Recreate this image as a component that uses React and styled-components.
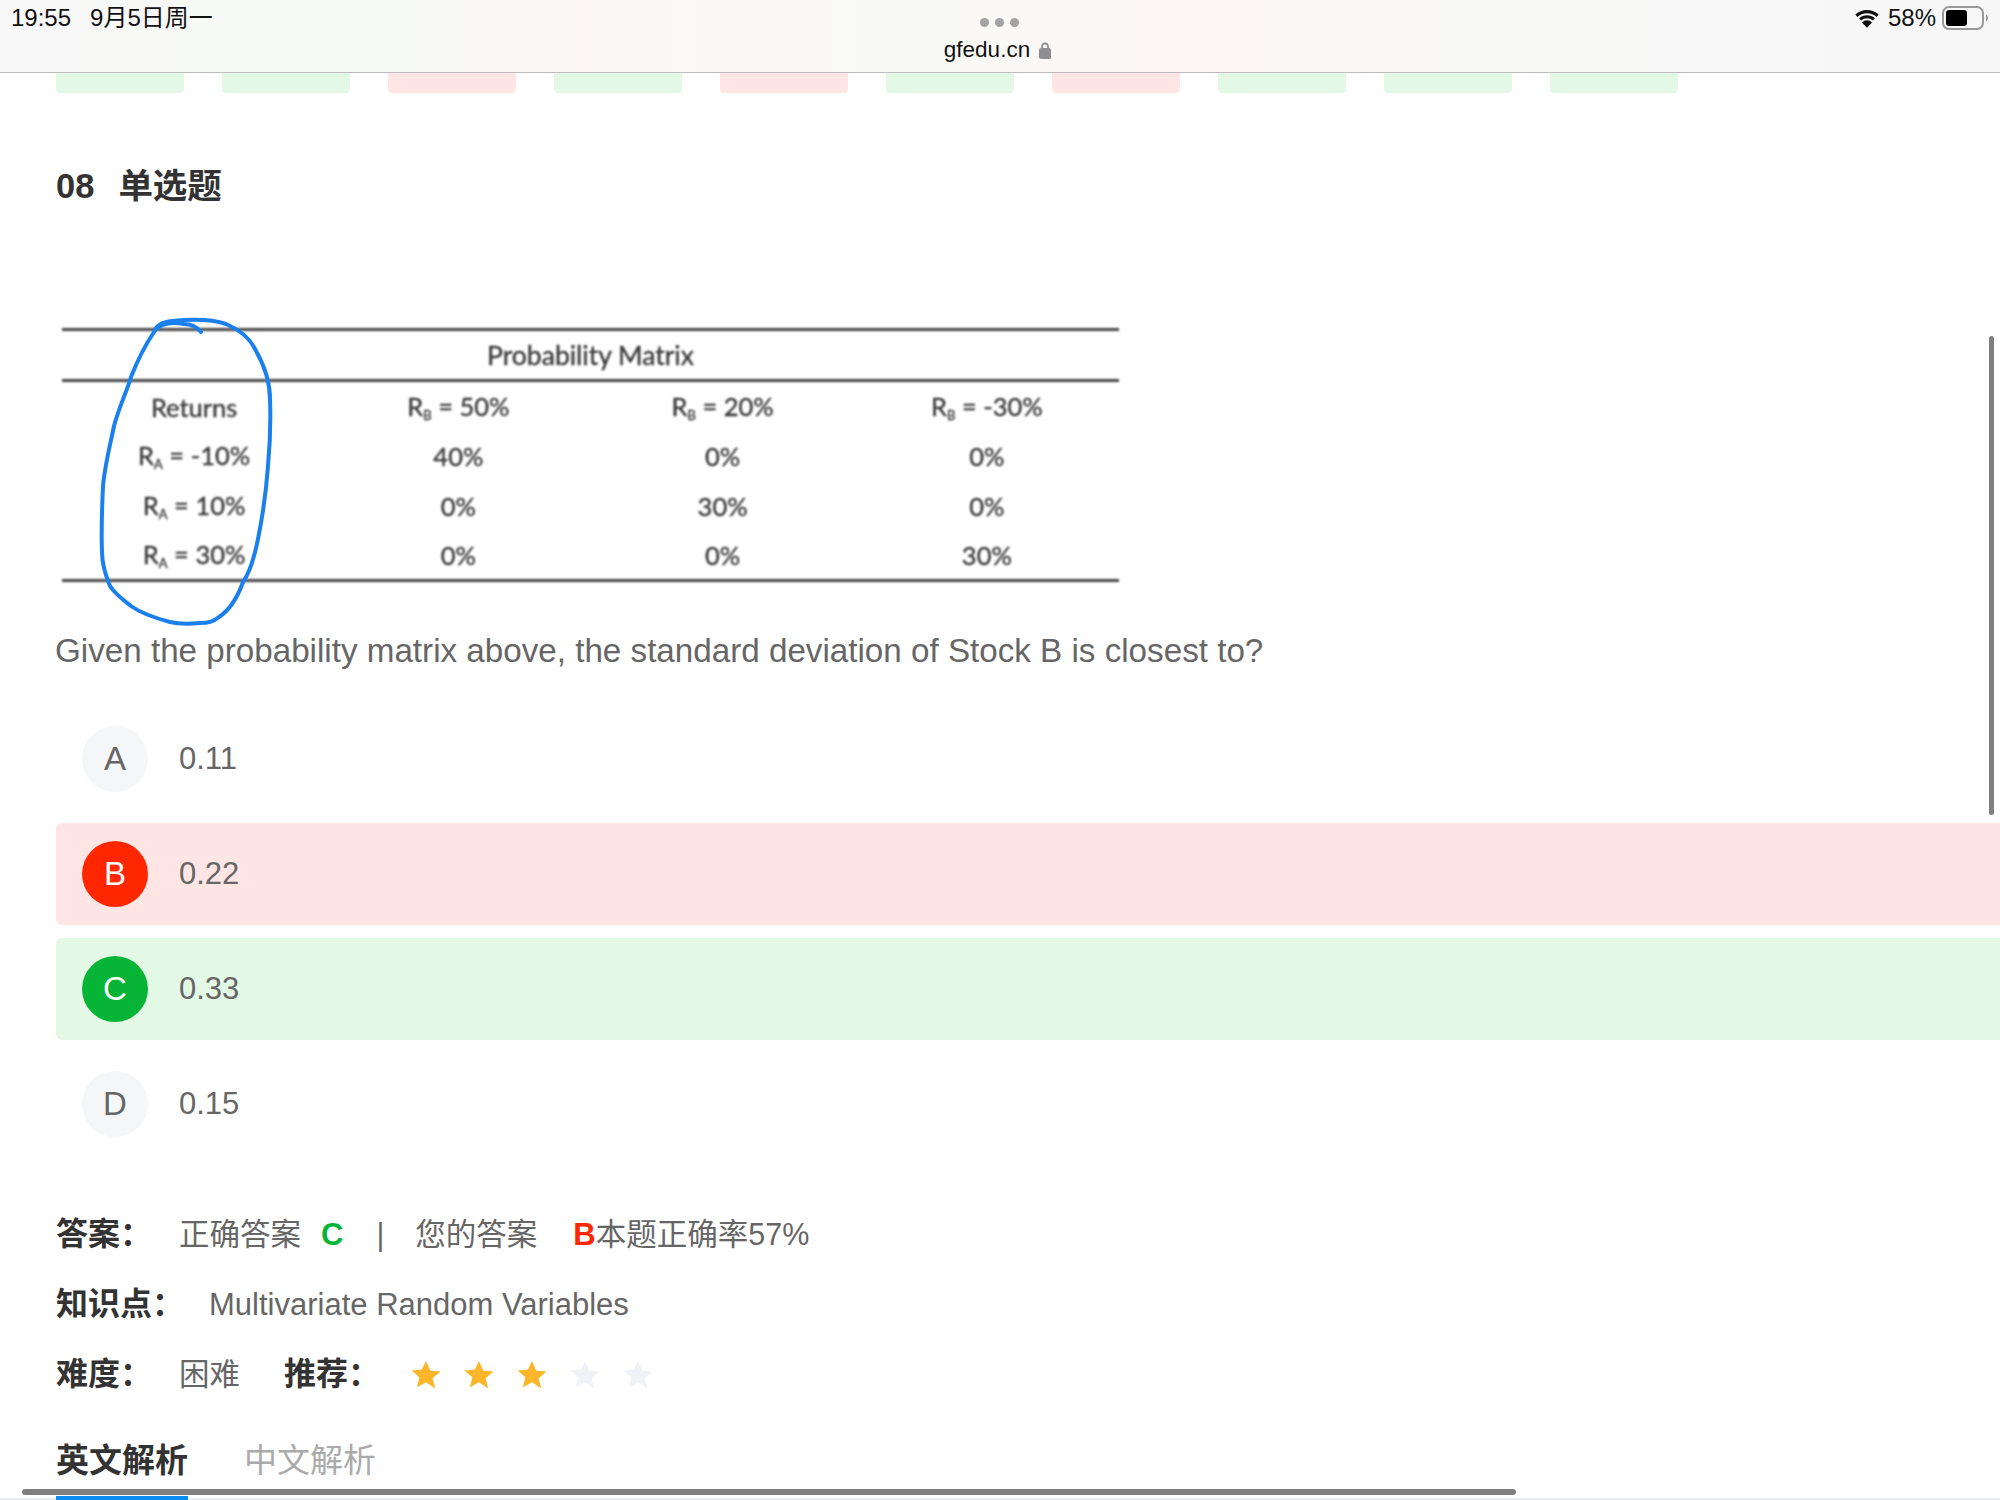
import React from 'react'
import styled, { createGlobalStyle } from 'styled-components'

const sans = '"Liberation Sans", "Noto Sans CJK SC", sans-serif'

const GlobalStyle = createGlobalStyle`
  html, body { margin: 0; padding: 0; background: #fff; }
  body { font-family: ${sans}; }
`

const Page = styled.div`
  position: relative;
  width: 2000px;
  height: 1500px;
  overflow: hidden;
  background: #fff;
  color: #666;
`

const StatusBar = styled.header`
  display: grid;
  grid-template-columns: 1fr auto 1fr;
  height: 72px;
  padding: 0 11px;
  border-bottom: 1px solid #bdbdbd;
  background: linear-gradient(90deg, #f7f8f7 0%, #f8faf7 20%, #fdf8f5 29%, #f9faf7 45%, #fdf7f5 60%, #f8f9f7 75%, #f7f7f8 100%);
  color: #111;
`

const StatusLeft = styled.div`
  display: flex;
  gap: 19px;
  align-items: baseline;
  height: 36px;
  line-height: 36px;
  font-size: 24px;
`

const StatusCenter = styled.div`
  display: flex;
  flex-direction: column;
  align-items: center;
`

const Dots = styled.div`
  display: flex;
  gap: 6px;
  margin-top: 18px;
`

const Dot = styled.i`
  width: 9px;
  height: 9px;
  border-radius: 50%;
  background: #a3a3a3;
`

const Url = styled.div`
  display: flex;
  align-items: center;
  gap: 9px;
  margin: 10px 5px 0 0;
  font-size: 22.500px;
  line-height: 26px;
`

const StatusRight = styled.div`
  display: flex;
  justify-content: flex-end;
  align-items: center;
  height: 36px;
  font-size: 24px;
`

const Percent = styled.span`
  margin: 0 6px 0 9px;
`

const ChipRow = styled.div`
  display: flex;
  gap: 38px;
  padding: 0 56px;
`

const Chip = styled.div`
  width: 128px;
  height: 20px;
  border-radius: 0 0 4px 4px;
  background: ${(p) => (p.$ok ? '#e3f8e5' : '#ffe6e5')};
`

const Title = styled.h2`
  display: flex;
  gap: 24px;
  margin: 73px 0 0 56px;
  font-size: 34.500px;
  line-height: 40px;
  font-weight: 700;
  color: #333;
`

const Matrix = styled.div`
  position: relative;
  width: 1057px;
  margin: 122px 0 0 62px;
  font-family: Lato, sans-serif;
  font-size: 25.500px;
  color: #333;
`

const MatrixInner = styled.div`
  filter: blur(0.9px);
  -webkit-text-stroke: 0.3px #333;
`

const Rule = styled.div`
  height: 3px;
  background: #444;
`

const MatrixTitle = styled.div`
  height: 48px;
  line-height: 49px;
  font-size: 26.500px;
  text-align: center;
`

const MatrixGrid = styled.div`
  display: grid;
  grid-template-columns: repeat(4, 1fr);
  grid-auto-rows: 49.500px;
  align-items: center;
  text-align: center;
  height: 197px;
`

const Small = styled.span`
  font-size: 13px;
  vertical-align: -4px;
`

const Scribble = styled.svg`
  position: absolute;
  left: -62px;
  top: -329px;
  width: 400px;
  height: 700px;
  pointer-events: none;
`

const Question = styled.p`
  margin: 49px 0 0 55px;
  font-size: 33.200px;
  line-height: 40px;
  color: #666;
`

const Options = styled.div`
  display: flex;
  flex-direction: column;
  gap: 13px;
  margin: 37px 0 0 56px;
`

const Option = styled.div`
  display: flex;
  align-items: center;
  gap: 31px;
  height: 102px;
  padding-left: 26px;
  border-radius: 6px 0 0 6px;
  background: ${(p) => ({ wrong: '#ffe6e5', right: '#e3f8e5' }[p.$state] || 'transparent')};
  font-size: 31px;
`

const Badge = styled.span`
  display: flex;
  align-items: center;
  justify-content: center;
  width: 66px;
  height: 66px;
  border-radius: 50%;
  font-size: 33px;
  background: ${(p) => ({ wrong: '#ff2600', right: '#07b536' }[p.$state] || '#f5f6f8')};
  color: ${(p) => (p.$state ? '#fff' : '#666')};
`

const Info = styled.div`
  margin: 59px 0 0 56px;
`

const InfoRow = styled.div`
  display: flex;
  align-items: baseline;
  height: 40px;
  line-height: 40px;
  margin-bottom: 30px;
  font-size: 30.500px;
  white-space: nowrap;
`

const Label = styled.span`
  font-size: 32px;
  font-weight: 700;
  color: #333;
  margin-left: ${(p) => p.$before || 0}px;
  margin-right: ${(p) => p.$gap}px;
`

const Mark = styled.b`
  color: ${(p) => p.$color};
  font-size: 31px;
  margin-left: ${(p) => p.$before}px;
`

const Divider = styled.span`
  margin: 0 31px 0 33px;
`

const Topic = styled.span`
  font-size: 31px;
`

const Stars = styled.span`
  display: flex;
  align-self: center;
  gap: 23px;
  margin: 1px 0 0 9px;
`

const Tabs = styled.div`
  display: flex;
  align-items: flex-start;
  gap: 56px;
  height: 65px;
  margin-top: 41px;
  padding-left: 56px;
  box-shadow: inset 0 -2px 0 #e8ebf2;
`

const Tab = styled.div`
  height: 65px;
  line-height: 52px;
  font-size: 33px;
  box-sizing: border-box;
  font-weight: ${(p) => (p.$active ? 700 : 400)};
  color: ${(p) => (p.$active ? '#333' : '#aaa')};
  border-bottom: 4px solid ${(p) => (p.$active ? '#0a8cf0' : 'transparent')};
`

const ScrollY = styled.div`
  position: absolute;
  left: 1989px;
  top: 336px;
  width: 5px;
  height: 479px;
  border-radius: 3px;
  background: #7f7f7f;
`

const ScrollX = styled.div`
  position: absolute;
  left: 22px;
  top: 1489px;
  width: 1494px;
  height: 6px;
  border-radius: 3px;
  background: #7f7f7f;
`

const chips = [1, 1, 0, 1, 0, 1, 0, 1, 1, 1]

const rows = [
  [<>Returns</>, <>R<Small>B</Small> = 50%</>, <>R<Small>B</Small> = 20%</>, <>R<Small>B</Small> = -30%</>],
  [<>R<Small>A</Small> = -10%</>, '40%', '0%', '0%'],
  [<>R<Small>A</Small> = 10%</>, '0%', '30%', '0%'],
  [<>R<Small>A</Small> = 30%</>, '0%', '0%', '30%']
]

const options = [
  { key: 'A', text: '0.11' },
  { key: 'B', text: '0.22', state: 'wrong' },
  { key: 'C', text: '0.33', state: 'right' },
  { key: 'D', text: '0.15' }
]

const Star = ({ on }) => (
  <svg width="30" height="30" viewBox="0 0 30 30">
    <path d="M15 1l4.200 9.600 10.300.9-7.800 6.800 2.400 10.200L15 22.200 5.900 27.500l2.400-10.200-7.800-6.800 10.300-.9z" fill={on ? '#fbb62c' : '#f0f2f7'} />
  </svg>
)

const Wifi = () => (
  <svg width="24" height="19" viewBox="0 0 26 20">
    <path d="M1.500 7a17 17 0 0 1 23 0M5.500 11a11 11 0 0 1 15 0" fill="none" stroke="#111" strokeWidth="3.400" />
    <path d="M13 20l-5.500-5.800a8 8 0 0 1 11 0z" fill="#111" />
  </svg>
)

const Battery = () => (
  <svg width="47" height="24" viewBox="0 0 47 24">
    <rect x="1" y="1" width="40" height="22" rx="6" fill="none" stroke="#999" strokeWidth="2" />
    <rect x="4" y="4" width="21" height="16" rx="3" fill="#000" />
    <path d="M44 8.500a4 4 0 0 1 0 7z" fill="#999" />
  </svg>
)

const Lock = () => (
  <svg width="12" height="17" viewBox="0 0 12 17">
    <path d="M3 7V4.500a3 3 0 0 1 6 0V7" fill="none" stroke="#8e8e93" strokeWidth="1.800" />
    <rect x="0" y="6" width="12" height="11" rx="2" fill="#8e8e93" />
  </svg>
)

const App = () => (
  <Page>
    <GlobalStyle />
    <StatusBar>
      <StatusLeft>
        <span>19:55</span>
        <span>9月5日周一</span>
      </StatusLeft>
      <StatusCenter>
        <Dots><Dot /><Dot /><Dot /></Dots>
        <Url>gfedu.cn <Lock /></Url>
      </StatusCenter>
      <StatusRight>
        <Wifi />
        <Percent>58%</Percent>
        <Battery />
      </StatusRight>
    </StatusBar>

    <ChipRow>
      {chips.map((ok, i) => <Chip key={i} $ok={ok} />)}
    </ChipRow>

    <Title>
      <span>08</span>
      <span>单选题</span>
    </Title>

    <Matrix>
      <MatrixInner>
        <Rule />
        <MatrixTitle>Probability Matrix</MatrixTitle>
        <Rule />
        <MatrixGrid>
          {rows.flat().map((cell, i) => <div key={i}>{cell}</div>)}
        </MatrixGrid>
        <Rule />
      </MatrixInner>
      <Scribble viewBox="0 0 400 700">
        <path
          d="M201 333C196 327 190 325 184 325C172 323 160 324 154 333C156 326 163 323 172 322C191 320 212 320 226 325C240 331 250 340 255 350C263 364 270 380 270 400C271 425 270 445 268 467C266 495 262 520 258 540C254 560 250 573 243 583C237 600 228 612 219 618C213 623 208 624 200 624C190 625 178 625 170 623C155 619 142 615 131 607C122 600 115 595 110 587C105 575 102 565 102 553C101 530 102 510 103 487C105 465 110 447 114 427C120 405 126 395 131 378C138 360 146 345 154 333"
          fill="none"
          stroke="#1a80ee"
          strokeWidth="4"
          strokeLinecap="round"
        />
      </Scribble>
    </Matrix>

    <Question>Given the probability matrix above, the standard deviation of Stock B is closest to?</Question>

    <Options>
      {options.map((o) => (
        <Option key={o.key} $state={o.state}>
          <Badge $state={o.state}>{o.key}</Badge>
          <span>{o.text}</span>
        </Option>
      ))}
    </Options>

    <Info>
      <InfoRow>
        <Label $gap={27}>答案：</Label>
        <span>正确答案</span>
        <Mark $color="#07b536" $before={20}>C</Mark>
        <Divider>|</Divider>
        <span>您的答案</span>
        <Mark $color="#ff2600" $before={36}>B</Mark>
        <span>本题正确率57%</span>
      </InfoRow>
      <InfoRow>
        <Label $gap={25}>知识点：</Label>
        <Topic>Multivariate Random Variables</Topic>
      </InfoRow>
      <InfoRow>
        <Label $gap={27}>难度：</Label>
        <span>困难</span>
        <Label $before={44} $gap={22}>推荐：</Label>
        <Stars>
          {[1, 1, 1, 0, 0].map((on, i) => <Star key={i} on={on} />)}
        </Stars>
      </InfoRow>
    </Info>

    <Tabs>
      <Tab $active>英文解析</Tab>
      <Tab>中文解析</Tab>
    </Tabs>

    <ScrollY />
    <ScrollX />
  </Page>
)

export default App
